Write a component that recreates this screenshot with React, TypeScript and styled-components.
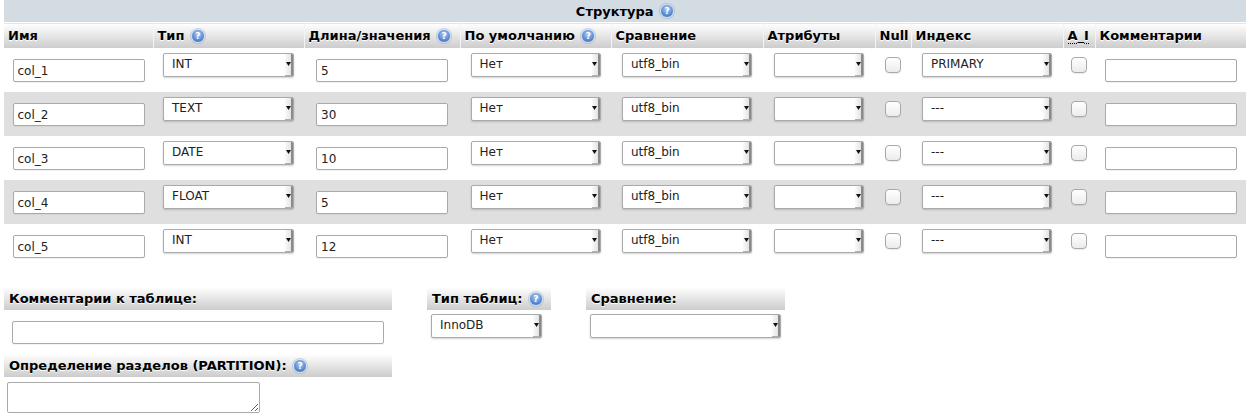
import React from 'react';
import styled, { createGlobalStyle } from 'styled-components';

const GlobalStyle = createGlobalStyle`
  body {
    margin: 0;
    background: #fff;
    font-family: "DejaVu Sans", "Liberation Sans", sans-serif;
    color: #000;
  }
`;

interface Column {
  name: string;
  type: string;
  length: string;
  index: string;
}

const columns: Column[] = [
  { name: 'col_1', type: 'INT', length: '5', index: 'PRIMARY' },
  { name: 'col_2', type: 'TEXT', length: '30', index: '---' },
  { name: 'col_3', type: 'DATE', length: '10', index: '---' },
  { name: 'col_4', type: 'FLOAT', length: '5', index: '---' },
  { name: 'col_5', type: 'INT', length: '12', index: '---' },
];

// widths of the structure table columns
const colWidths = [149, 151, 156, 151, 152, 112, 36, 152, 32, 151];

// Small blue help bubble
const Help: React.FC = () => <HelpIcon>?</HelpIcon>;

// Fake select: value on the left, arrow strip on the right
const Select: React.FC<{ value?: string; width: number }> = ({ value = '', width }) => (
  <SelectBox $w={width}>
    <SelectValue>{value}</SelectValue>
    <SelectArrow>
      <svg width="5" height="4" viewBox="0 0 5 4">
        <path d="M0 0 L5 0 L2.5 4 Z" fill="#111" />
      </svg>
    </SelectArrow>
  </SelectBox>
);

const App: React.FC = () => {
  return (
    <Page>
      <GlobalStyle />
      <StructureTable>
        <colgroup>
          {colWidths.map((w, i) => (
            <col key={i} style={{ width: w }} />
          ))}
        </colgroup>
        <thead>
          <tr>
            <CaptionCell colSpan={10}>
              Структура <Help />
            </CaptionCell>
          </tr>
          <tr>
            <HeadCell>Имя</HeadCell>
            <HeadCell>
              Тип <Help />
            </HeadCell>
            <HeadCell>
              Длина/значения <Help />
            </HeadCell>
            <HeadCell>
              По умолчанию <Help />
            </HeadCell>
            <HeadCell>Сравнение</HeadCell>
            <HeadCell>Атрибуты</HeadCell>
            <HeadCell>Null</HeadCell>
            <HeadCell>Индекс</HeadCell>
            <HeadCell>
              <Abbr title="AUTO_INCREMENT">A_I</Abbr>
            </HeadCell>
            <HeadCell>Комментарии</HeadCell>
          </tr>
        </thead>
        <tbody>
          {columns.map((c, i) => (
            <Row key={c.name} $odd={i % 2 === 1}>
              <Cell>
                <TextInput $w={132} defaultValue={c.name} />
              </Cell>
              <Cell>
                <Select value={c.type} width={131} />
              </Cell>
              <Cell>
                <TextInput $w={132} defaultValue={c.length} />
              </Cell>
              <Cell>
                <Select value="Нет" width={130} />
              </Cell>
              <Cell>
                <Select value="utf8_bin" width={130} />
              </Cell>
              <Cell>
                <Select width={90} />
              </Cell>
              <Cell>
                <Check type="checkbox" />
              </Cell>
              <Cell>
                <Select value={c.index} width={130} />
              </Cell>
              <Cell>
                <Check type="checkbox" />
              </Cell>
              <Cell>
                <TextInput $w={132} />
              </Cell>
            </Row>
          ))}
        </tbody>
      </StructureTable>

      <Options>
        <Block $w={388}>
          <BlockHead>Комментарии к таблице:</BlockHead>
          <BlockBody $center>
            <TextInput $w={372} />
          </BlockBody>
          <BlockHead $gap>
            Определение разделов (PARTITION): <Help />
          </BlockHead>
          <AreaBody>
            <TextArea />
          </AreaBody>
        </Block>
        <Block $w={124}>
          <BlockHead>
            Тип таблиц: <Help />
          </BlockHead>
          <SelectBody>
            <Select value="InnoDB" width={111} />
          </SelectBody>
        </Block>
        <Block $w={199}>
          <BlockHead>Сравнение:</BlockHead>
          <SelectBody>
            <Select width={191} />
          </SelectBody>
        </Block>
      </Options>
    </Page>
  );
};

// Styled components
const Page = styled.div`
  padding: 0 4px;
  width: 1242px;
`;

const StructureTable = styled.table`
  border-collapse: collapse;
  table-layout: fixed;
  width: 1242px;
`;

const CaptionCell = styled.th`
  height: 22px;
  padding: 0;
  background: #d3dce3;
  text-align: center;
  font-size: 13px;
  font-weight: bold;
  vertical-align: middle;
`;

const HeadCell = styled.th`
  height: 25px;
  padding: 0 0 0 4px;
  border-top: 1px solid #fff;
  border-right: 1px solid #f4f4f4;
  background: linear-gradient(#ffffff, #cccccc);
  text-align: left;
  font-size: 13px;
  font-weight: bold;
  white-space: nowrap;
  text-shadow: 0 1px 0 #fff;
  vertical-align: middle;
  &:last-child {
    border-right: none;
  }
`;

const Abbr = styled.abbr`
  text-decoration: none;
  border-bottom: 1px dotted #000;
`;

const HelpIcon = styled.span`
  display: inline-block;
  box-sizing: border-box;
  width: 14px;
  height: 14px;
  margin: -2px 0 0 2px;
  border-radius: 50%;
  border: 1px solid #d3e0f2;
  background: radial-gradient(circle at 50% 35%, #b0cdf2, #4a7fcb 70%);
  box-shadow: 0 0 0 1px rgba(120, 150, 200, 0.35);
  color: #fff;
  font-size: 9px;
  font-weight: bold;
  line-height: 12px;
  text-align: center;
  text-shadow: none;
  vertical-align: middle;
`;

const Row = styled.tr<{ $odd: boolean }>`
  height: 44px;
  background: ${p => (p.$odd ? '#dfdfdf' : '#ffffff')};
`;

const Cell = styled.td`
  padding: 5px 0 0;
  text-align: center;
  vertical-align: top;
`;

const TextInput = styled.input<{ $w: number }>`
  box-sizing: border-box;
  width: ${p => p.$w}px;
  height: 23px;
  margin: 6px 0 0;
  padding: 0 4px;
  border: 1px solid #aaa;
  border-radius: 2px;
  background: #fff;
  font-family: "DejaVu Sans", sans-serif;
  font-size: 12px;
  color: #222;
  box-shadow: 0 1px 1px rgba(0, 0, 0, 0.05);
  vertical-align: top;
  outline: none;
`;

const SelectBox = styled.div<{ $w: number }>`
  display: inline-flex;
  box-sizing: border-box;
  width: ${p => p.$w}px;
  height: 24px;
  border: 1px solid #aaa;
  border-radius: 2px;
  background: #fff;
  box-shadow: 0 1px 2px rgba(0, 0, 0, 0.18);
  text-align: left;
  vertical-align: top;
  overflow: hidden;
`;

const SelectValue = styled.span`
  flex: 1;
  padding: 3px 0 0 8px;
  font-size: 12px;
  line-height: 14px;
  color: #222;
  white-space: nowrap;
  overflow: hidden;
`;

const SelectArrow = styled.span`
  display: flex;
  align-items: center;
  justify-content: center;
  width: 6px;
  padding-bottom: 2px;
  background: linear-gradient(to right, #fafafa, #e4e4e4);
  border-right: 2px solid #8a8a8a;
  border-bottom: 1px solid #b0b0b0;
`;

const Check = styled.input`
  appearance: none;
  box-sizing: border-box;
  width: 16px;
  height: 16px;
  margin: 4px 0 0;
  border: 1px solid #a8a8a8;
  border-radius: 4px;
  background: linear-gradient(#ffffff, #ececec);
  box-shadow: 0 1px 1px rgba(0, 0, 0, 0.08);
  vertical-align: top;
`;

const Options = styled.div`
  display: flex;
  align-items: flex-start;
  gap: 35px;
  margin-top: 19px;
`;

const Block = styled.div<{ $w: number }>`
  width: ${p => p.$w}px;
  flex: none;
`;

const BlockHead = styled.div<{ $gap?: boolean }>`
  height: 23px;
  margin-top: ${p => (p.$gap ? '10px' : '0')};
  padding: 0 5px;
  background: linear-gradient(#ffffff, #cccccc);
  font-size: 13px;
  font-weight: bold;
  line-height: 23px;
  white-space: nowrap;
  text-shadow: 0 1px 0 #fff;
`;

const BlockBody = styled.div<{ $center?: boolean }>`
  padding-top: 5px;
  text-align: ${p => (p.$center ? 'center' : 'left')};
`;

const SelectBody = styled.div`
  padding: 4px 0 0 4px;
`;

const AreaBody = styled.div`
  padding: 5px 0 0 3px;
`;

const TextArea = styled.textarea`
  display: block;
  box-sizing: border-box;
  width: 253px;
  height: 31px;
  margin: 0;
  border: 1px solid #aaa;
  border-radius: 2px;
  font-family: "DejaVu Sans", sans-serif;
  font-size: 12px;
`;

export default App;
